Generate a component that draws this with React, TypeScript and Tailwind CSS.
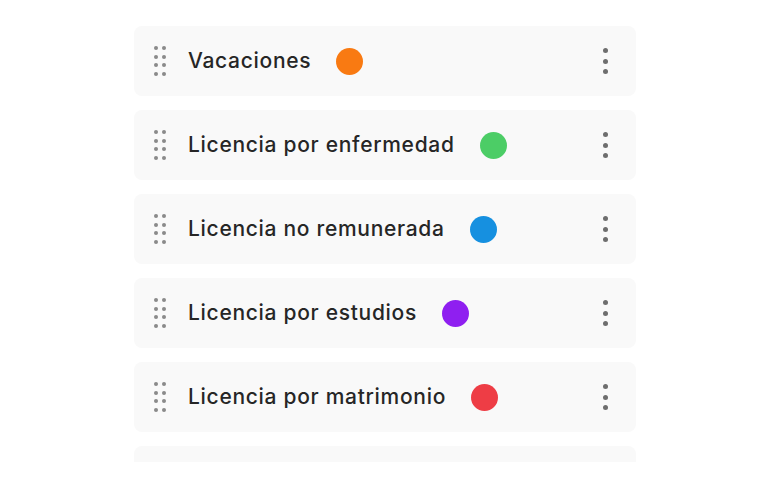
const types = [
  { name: 'Vacaciones', color: 'bg-[#f97a12]' },
  { name: 'Licencia por enfermedad', color: 'bg-[#4ccd66]' },
  { name: 'Licencia no remunerada', color: 'bg-[#1690e0]' },
  { name: 'Licencia por estudios', color: 'bg-[#8f1ff0]' },
  { name: 'Licencia por matrimonio', color: 'bg-[#ee3d45]' },
];

function Grip() {
  return (
    <div className="grid grid-cols-2 gap-x-[4px] gap-y-[4.5px] shrink-0">
      {Array.from({ length: 8 }).map((_, i) => (
        <span key={i} className="w-[4px] h-[4px] rounded-full bg-[#8a8a8a]" />
      ))}
    </div>
  );
}

function Kebab() {
  return (
    <div className="flex flex-col items-center gap-[5.5px]">
      <span className="w-[5px] h-[5px] rounded-full bg-[#6e6e6e]" />
      <span className="w-[5px] h-[5px] rounded-full bg-[#6e6e6e]" />
      <span className="w-[5px] h-[5px] rounded-full bg-[#6e6e6e]" />
    </div>
  );
}

export default function App() {
  return (
    <div className="w-[768px] h-[480px] bg-white pt-[26px] font-['Inter',sans-serif]">
      <div className="w-[502px] ml-[134px] h-[436px] overflow-hidden flex flex-col gap-[14px]">
        {types.map((t) => (
          <div
            key={t.name}
            className="h-[70px] shrink-0 rounded-[8px] bg-[#f9f9f9] flex items-center pl-[20px] pr-[28px]"
          >
            <Grip />
            <span className="ml-[22px] text-[21px] font-medium text-[#262626] tracking-[0.7px]">
              {t.name}
            </span>
            <span className={`ml-[25px] w-[27px] h-[27px] rounded-full ${t.color}`} />
            <div className="ml-auto">
              <Kebab />
            </div>
          </div>
        ))}
        {/* next row, cut off by the list's edge */}
        <div className="h-[70px] shrink-0 rounded-[8px] bg-[#f9f9f9]" />
      </div>
    </div>
  );
}
